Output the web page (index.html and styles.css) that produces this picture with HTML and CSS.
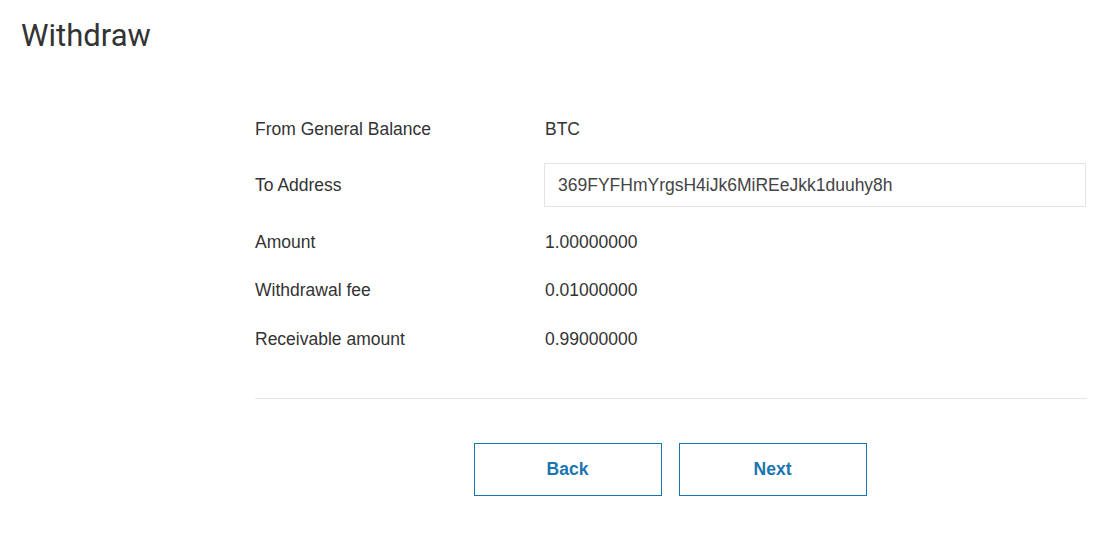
FILE: index.html
```html
<!DOCTYPE html>
<html lang="en">
<head>
    <meta charset="UTF-8">
    <meta name="viewport" content="width=device-width, initial-scale=1.0">
    <title>Withdraw</title>
    <link rel="stylesheet" href="styles.css">
</head>
<body>
    <header class="page-header">
        <h1>Withdraw</h1>
    </header>

    <div class="withdraw-form">
        <div class="form-row">
            <span class="form-label">From General Balance</span>
            <span class="form-value">BTC</span>
        </div>
        <div class="form-row form-row-input">
            <span class="form-label">To Address</span>
            <input class="address-input" type="text" value="369FYFHmYrgsH4iJk6MiREeJkk1duuhy8h" readonly>
        </div>
        <div class="form-row">
            <span class="form-label">Amount</span>
            <span class="form-value">1.00000000</span>
        </div>
        <div class="form-row">
            <span class="form-label">Withdrawal fee</span>
            <span class="form-value">0.01000000</span>
        </div>
        <div class="form-row">
            <span class="form-label">Receivable amount</span>
            <span class="form-value">0.99000000</span>
        </div>

        <hr class="divider">

        <div class="form-actions">
            <button class="btn-outline">Back</button>
            <button class="btn-outline">Next</button>
        </div>
    </div>
</body>
</html>
```

FILE: styles.css
```css
body {
    margin: 0;
    padding: 0;
    background-color: #fff;
    font-family: "Liberation Sans", Arial, sans-serif;
    color: #333;
}

.page-header {
    padding: 17px 21px 0;
}

.page-header h1 {
    margin: 0;
    font-family: Roboto, "Liberation Sans", sans-serif;
    font-weight: 400;
    font-size: 31px;
    line-height: 38px;
    color: #333;
}

.withdraw-form {
    margin: 50px 0 0 255px;
    width: 832px;
}

.form-row {
    display: grid;
    grid-template-columns: 290px 1fr;
    align-items: center;
    height: 48px;
    font-size: 17.5px;
}

.form-row-input {
    height: 64px;
}

.form-row:nth-child(n+3) {
    height: 48.5px;
}

.form-row:nth-child(3) {
    margin-top: 1px;
}

.form-label,
.form-value {
    color: #333;
}

.address-input {
    height: 44px;
    margin-left: -1px;
    padding: 0 13px;
    border: 1px solid #e4e4e4;
    box-sizing: border-box;
    width: 542px;
    font-family: "Liberation Sans", Arial, sans-serif;
    font-size: 17.5px;
    color: #444;
    outline: none;
}

.divider {
    border: none;
    border-top: 1px solid #e5e5e5;
    margin: 34px 0 0;
}

.form-actions {
    display: flex;
    justify-content: center;
    gap: 17px;
    margin-top: 44px;
    padding-right: 2px;
}

.btn-outline {
    width: 188px;
    height: 53px;
    background-color: #fff;
    border: 1px solid #1b75b0;
    border-radius: 0;
    color: #1b75b0;
    font-family: "Liberation Sans", Arial, sans-serif;
    font-weight: bold;
    font-size: 17.5px;
    cursor: pointer;
}
```
